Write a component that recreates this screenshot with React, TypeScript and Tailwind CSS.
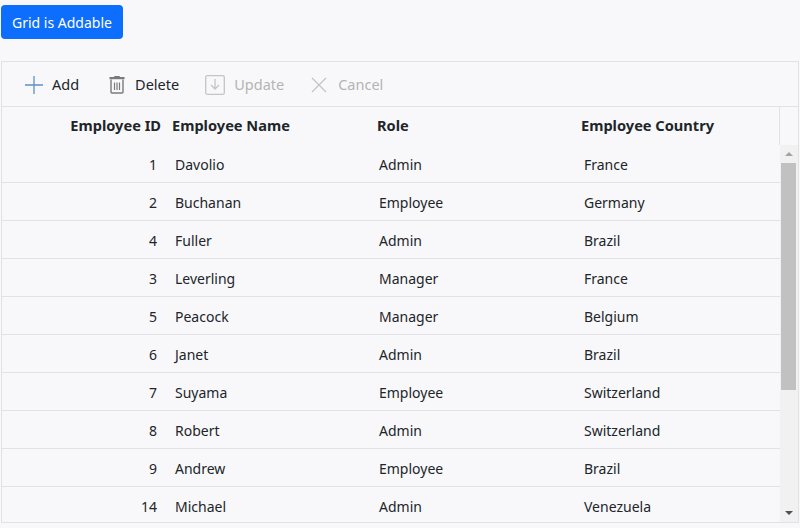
import React from "react";

const rows = [
	{ id: 1, name: "Davolio", role: "Admin", country: "France" },
	{ id: 2, name: "Buchanan", role: "Employee", country: "Germany" },
	{ id: 4, name: "Fuller", role: "Admin", country: "Brazil" },
	{ id: 3, name: "Leverling", role: "Manager", country: "France" },
	{ id: 5, name: "Peacock", role: "Manager", country: "Belgium" },
	{ id: 6, name: "Janet", role: "Admin", country: "Brazil" },
	{ id: 7, name: "Suyama", role: "Employee", country: "Switzerland" },
	{ id: 8, name: "Robert", role: "Admin", country: "Switzerland" },
	{ id: 9, name: "Andrew", role: "Employee", country: "Brazil" },
	{ id: 14, name: "Michael", role: "Admin", country: "Venezuela" },
];

function PlusIcon() {
	return (
		<svg width="20" height="20" viewBox="0 0 20 20" fill="none">
			<path d="M10 1v18M1 10h18" stroke="#5f8fc9" strokeWidth="1.3" />
		</svg>
	);
}

function TrashIcon() {
	return (
		<svg width="16" height="18" viewBox="0 0 16 18" fill="none">
			<rect x="0.5" y="1" width="15" height="2.2" fill="#7a7a7a" />
			<path d="M5.5 1V0.5h5V1" stroke="#7a7a7a" strokeWidth="1" />
			<path d="M2 3.5v12.5a1 1 0 0 0 1 1h10a1 1 0 0 0 1-1V3.5" stroke="#7a7a7a" strokeWidth="1.4" />
			<path d="M5.5 6.5v7.5M8 6.5v7.5M10.5 6.5v7.5" stroke="#7a7a7a" strokeWidth="1.2" />
		</svg>
	);
}

function UpdateIcon() {
	return (
		<svg width="20" height="20" viewBox="0 0 20 20" fill="none">
			<rect x="0.7" y="0.7" width="18.6" height="18.6" rx="1.5" stroke="#c4c4c4" strokeWidth="1.3" />
			<path d="M10 4v10M6 10l4 4 4-4" stroke="#c4c4c4" strokeWidth="1.3" />
		</svg>
	);
}

function CancelIcon() {
	return (
		<svg width="16" height="16" viewBox="0 0 16 16" fill="none">
			<path d="M1 1l14 14M15 1L1 15" stroke="#c4c4c4" strokeWidth="1.3" />
		</svg>
	);
}

export default function App() {
	return (
		<div className="min-h-screen bg-[#f8f8fa] pl-px pt-[5px] pr-px font-['Noto_Sans',sans-serif] text-[14px] text-[#212529]">
			<button className="h-[34px] rounded-[4px] bg-[#0d6efd] px-[11px] text-[14px] text-white">
				Grid is Addable
			</button>

			<div className="mt-[22px] border border-[#e2e2e6]">
				<div className="flex h-[45px] items-center border-b border-[#e2e2e6] pl-[22px] pt-px text-[14.5px]">
					<div className="flex items-center gap-[8px]">
						<PlusIcon />
						<span>Add</span>
					</div>
					<div className="ml-[30px] flex items-center gap-[10px]">
						<TrashIcon />
						<span>Delete</span>
					</div>
					<div className="ml-[26px] flex items-center gap-[9px] text-[#b4b4b4]">
						<UpdateIcon />
						<span>Update</span>
					</div>
					<div className="ml-[27px] flex items-center gap-[11px] text-[#b4b4b4]">
						<CancelIcon />
						<span>Cancel</span>
					</div>
				</div>

				<div className="flex h-[38px] items-center text-[14.6px] font-bold">
					<div className="w-[164px] pr-[5px] text-right">Employee ID</div>
					<div className="w-[204px] pl-[6px]">Employee Name</div>
					<div className="w-[204px] pl-[7px]">Role</div>
					<div className="flex-1 pl-[7px]">Employee Country</div>
					<div className="w-[19px] self-stretch border-l border-[#e2e2e6]" />
				</div>

				<div className="flex h-[377px] overflow-hidden">
					<div className="flex-1">
						{rows.map((r) => (
							<div
								key={r.id}
								className="flex h-[38px] items-center border-b border-[#e2e2e6] pt-[2px]"
							>
								<div className="w-[164px] pr-[9px] text-right">{r.id}</div>
								<div className="w-[204px] pl-[9px]">{r.name}</div>
								<div className="w-[204px] pl-[9px]">{r.role}</div>
								<div className="flex-1 pl-[10px]">{r.country}</div>
							</div>
						))}
					</div>
					<div className="flex w-[18px] flex-col items-center bg-[#f1f1f1] pr-px">
						<div className="flex h-[18px] items-center justify-center">
							<div className="h-0 w-0 border-x-[4px] border-b-[4px] border-x-transparent border-b-[#a3a3a3]" />
						</div>
						<div className="h-[227px] w-[15px] bg-[#c1c1c1]" />
						<div className="flex-1" />
						<div className="flex h-[18px] items-center justify-center">
							<div className="h-0 w-0 border-x-[4px] border-t-[4px] border-x-transparent border-t-[#505050]" />
						</div>
					</div>
				</div>
			</div>
		</div>
	);
}
